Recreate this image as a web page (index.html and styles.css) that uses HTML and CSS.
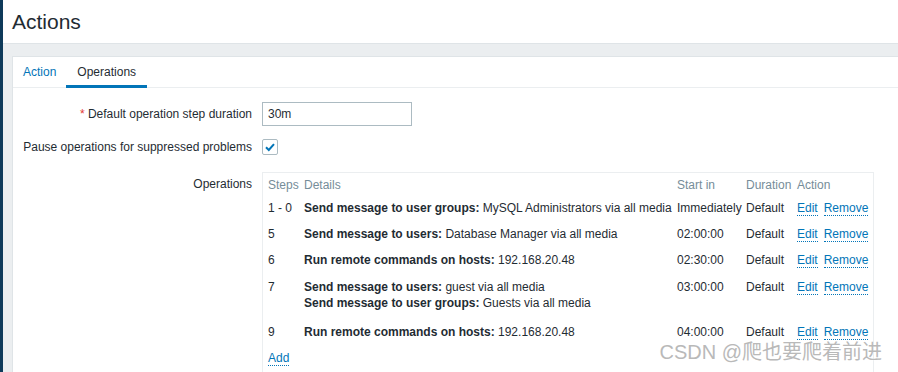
FILE: index.html
```html
<!DOCTYPE html>
<html>
<head>
  <title>Actions</title>
  <meta charset="utf-8">
  <link rel="stylesheet" href="styles.css">
</head>
<body>
<div class="sidebar"></div>
<div class="main">
  <header class="page-header">
    <h1>Actions</h1>
  </header>

  <div class="content">
    <div class="tabs-box">
      <ul class="tabs">
        <li><a href="#">Action</a></li>
        <li class="active"><a href="#">Operations</a></li>
      </ul>

      <form class="form-grid">
        <div class="form-row row-duration">
          <label for="esc_period"><span class="req">*</span> Default operation step duration</label>
          <div class="field"><input type="text" id="esc_period" value="30m"></div>
        </div>

        <div class="form-row row-pause">
          <label>Pause operations for suppressed problems</label>
          <div class="field">
            <span class="checkbox">
              <svg width="14" height="14" viewBox="0 0 14 14"><path d="M3 7.2 L5.8 10 L11 4.2" fill="none" stroke="#0275b8" stroke-width="2"/></svg>
            </span>
          </div>
        </div>

        <div class="form-row row-ops">
          <label class="top">Operations</label>
          <div class="field">
            <div class="ops-box">
              <table class="ops">
                <colgroup>
                  <col style="width: 36px">
                  <col style="width: 373px">
                  <col style="width: 69px">
                  <col style="width: 51px">
                  <col style="width: 71px">
                </colgroup>
                <thead>
                <tr>
                  <th>Steps</th>
                  <th>Details</th>
                  <th>Start in</th>
                  <th>Duration</th>
                  <th>Action</th>
                </tr>
                </thead>
                <tbody>
                <tr>
                  <td>1 - 0</td>
                  <td><b>Send message to user groups:</b> MySQL Administrators via all media</td>
                  <td>Immediately</td>
                  <td>Default</td>
                  <td><a class="link" href="#">Edit</a><a class="link" href="#">Remove</a></td>
                </tr>
                <tr>
                  <td>5</td>
                  <td><b>Send message to users:</b> Database Manager via all media</td>
                  <td>02:00:00</td>
                  <td>Default</td>
                  <td><a class="link" href="#">Edit</a><a class="link" href="#">Remove</a></td>
                </tr>
                <tr>
                  <td>6</td>
                  <td><b>Run remote commands on hosts:</b> 192.168.20.48</td>
                  <td>02:30:00</td>
                  <td>Default</td>
                  <td><a class="link" href="#">Edit</a><a class="link" href="#">Remove</a></td>
                </tr>
                <tr class="multi">
                  <td>7</td>
                  <td>
                    <div><b>Send message to users:</b> guest via all media</div>
                    <div><b>Send message to user groups:</b> Guests via all media</div>
                  </td>
                  <td>03:00:00</td>
                  <td>Default</td>
                  <td><a class="link" href="#">Edit</a><a class="link" href="#">Remove</a></td>
                </tr>
                <tr>
                  <td>9</td>
                  <td><b>Run remote commands on hosts:</b> 192.168.20.48</td>
                  <td>04:00:00</td>
                  <td>Default</td>
                  <td><a class="link" href="#">Edit</a><a class="link" href="#">Remove</a></td>
                </tr>
                <tr>
                  <td colspan="5"><a class="link" href="#">Add</a></td>
                </tr>
                </tbody>
              </table>
            </div>
          </div>
        </div>
      </form>
    </div>
  </div>
</div>

<div class="watermark">CSDN @爬也要爬着前进</div>
</body>
</html>
```

FILE: styles.css
```css
html, body {
  margin: 0;
  height: 100%;
}

body {
  display: flex;
  background-color: #ebeef0;
  font-family: "Liberation Sans", Arial, sans-serif;
  font-size: 12px;
  color: #1f2c33;
  overflow: hidden;
}

.sidebar {
  width: 3px;
  flex-shrink: 0;
  background-color: #0e3a5a;
}

.main {
  flex: 1;
  min-width: 0;
}

.page-header {
  height: 44px;
  background-color: #fff;
  border-bottom: 1px solid #dfe4e7;
  padding-left: 9px;
  box-sizing: border-box;
}

.page-header h1 {
  margin: 0;
  font-size: 21px;
  font-weight: normal;
  line-height: 44px;
}

.content {
  padding: 12px 0 0 9px;
}

.tabs-box {
  background-color: #fff;
  border: 1px solid #dfe4e7;
  border-right: none;
  min-height: 400px;
}

.tabs {
  list-style: none;
  margin: 0;
  padding: 0;
  display: flex;
  height: 30px;
  border-bottom: 1px solid #ebeef0;
}

.tabs li {
  padding: 1px 10px 0;
  line-height: 29px;
  height: 27px;
  border-bottom: 3px solid transparent;
}

.tabs li.active {
  padding: 1px 11px 0;
  border-bottom-color: #0275b8;
}

.tabs a {
  color: #0275b8;
  text-decoration: none;
}

.tabs li.active a {
  color: #1f2c33;
}

.form-grid {
  padding-top: 14px;
}

.form-row {
  display: grid;
  grid-template-columns: 239px 1fr;
  column-gap: 10px;
  align-items: center;
}

.form-row label {
  text-align: right;
}

.form-row label.top {
  align-self: start;
  padding-top: 5px;
}

.req {
  color: #e33734;
}

.row-pause {
  margin-top: 10px;
  height: 22px;
}

.row-ops {
  margin-top: 14px;
}

input[type="text"] {
  width: 150px;
  height: 24px;
  box-sizing: border-box;
  border: 1px solid #acbbc2;
  padding: 0 5px;
  font-family: inherit;
  font-size: 12px;
  color: #1f2c33;
  margin: 0;
}

.checkbox {
  display: flex;
  align-items: center;
  justify-content: center;
  width: 16px;
  height: 16px;
  box-sizing: border-box;
  border: 1px solid #acbbc2;
  border-radius: 2px;
}

.ops-box {
  width: 612px;
  box-sizing: border-box;
  border: 1px solid #ebeef0;
  padding: 0 5px;
  min-height: 220px;
}

.ops {
  width: 600px;
  table-layout: fixed;
  border-collapse: collapse;
}

.ops col:nth-child(2) {
  width: 372px;
}

.ops th {
  color: #768d99;
  font-weight: normal;
  text-align: left;
  padding: 5px 0 4px;
  line-height: 14px;
  white-space: nowrap;
}

.ops td {
  padding: 4px 0 6px;
  line-height: 16px;
  vertical-align: top;
  white-space: nowrap;
}

.ops tr.multi td {
  padding-top: 5px;
  padding-bottom: 9px;
}

.link {
  color: #0275b8;
  text-decoration: none;
  border-bottom: 1px dotted #0275b8;
}

.link + .link {
  margin-left: 6px;
}

.watermark {
  position: absolute;
  right: 16px;
  bottom: 7px;
  font-size: 20px;
  color: #b9b9b9;
  font-family: "Liberation Sans", "Noto Sans CJK SC", sans-serif;
  text-shadow: 0 0 2px #fff;
}
```
